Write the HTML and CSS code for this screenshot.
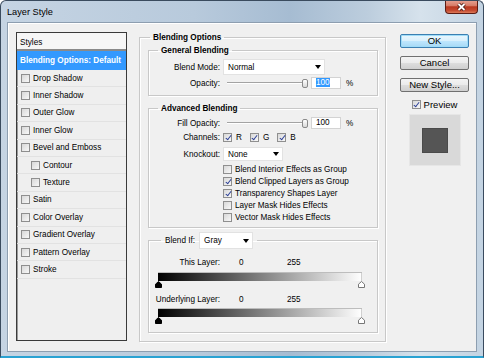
FILE: index.html
```html
<!DOCTYPE html>
<html lang="en">
<head>
    <meta charset="UTF-8">
    <meta name="viewport" content="width=device-width, initial-scale=1.0">
    <title>Layer Style</title>
    <link rel="stylesheet" href="styles.css">
</head>
<body>
    <div class="window">
        <div class="titlebar">
            <span class="title">Layer Style</span>
            <button class="close-btn">
                <svg width="13" height="10" viewBox="0 0 13 10"><path d="M3.5 2 L9.5 8 M9.5 2 L3.5 8" stroke="#4a1710" stroke-width="3.6"/><path d="M3.5 2 L9.5 8 M9.5 2 L3.5 8" stroke="#fff" stroke-width="1.8"/></svg>
            </button>
        </div>
        <div class="client">
            <div class="styles-list">
                <div class="list-head">Styles</div>
                <div class="list-item active">Blending Options: Default</div>
                <div class="list-item"><span class="check"></span>Drop Shadow</div>
                <div class="list-item"><span class="check"></span>Inner Shadow</div>
                <div class="list-item"><span class="check"></span>Outer Glow</div>
                <div class="list-item"><span class="check"></span>Inner Glow</div>
                <div class="list-item"><span class="check"></span>Bevel and Emboss</div>
                <div class="list-item sub"><span class="check"></span>Contour</div>
                <div class="list-item sub"><span class="check"></span>Texture</div>
                <div class="list-item"><span class="check"></span>Satin</div>
                <div class="list-item"><span class="check"></span>Color Overlay</div>
                <div class="list-item"><span class="check"></span>Gradient Overlay</div>
                <div class="list-item"><span class="check"></span>Pattern Overlay</div>
                <div class="list-item"><span class="check"></span>Stroke</div>
            </div>

            <fieldset class="group main-group">
                <legend>Blending Options</legend>

                <fieldset class="group general">
                    <legend>General Blending</legend>
                    <div class="form-row">
                        <span class="label">Blend Mode:</span>
                        <div class="select mode">Normal</div>
                    </div>
                    <div class="form-row gap-sm">
                        <span class="label">Opacity:</span>
                        <div class="slider-field">
                            <div class="slider"><span class="track"></span><span class="thumb"></span></div>
                            <span class="num-input"><span class="selected">100</span></span>
                            <span class="unit">%</span>
                        </div>
                    </div>
                </fieldset>

                <fieldset class="group advanced">
                    <legend>Advanced Blending</legend>
                    <div class="form-row">
                        <span class="label">Fill Opacity:</span>
                        <div class="slider-field">
                            <div class="slider"><span class="track"></span><span class="thumb"></span></div>
                            <span class="num-input">100</span>
                            <span class="unit">%</span>
                        </div>
                    </div>
                    <div class="form-row gap-sm">
                        <span class="label">Channels:</span>
                        <div class="channels">
                            <span class="check-item"><span class="check checked"></span>R</span>
                            <span class="check-item"><span class="check checked"></span>G</span>
                            <span class="check-item"><span class="check checked"></span>B</span>
                        </div>
                    </div>
                    <div class="form-row gap-md">
                        <span class="label">Knockout:</span>
                        <div class="select knockout">None</div>
                    </div>
                    <div class="form-row gap-sm">
                        <span></span>
                        <div class="option-list">
                            <span class="check-item"><span class="check"></span>Blend Interior Effects as Group</span>
                            <span class="check-item"><span class="check checked"></span>Blend Clipped Layers as Group</span>
                            <span class="check-item"><span class="check checked"></span>Transparency Shapes Layer</span>
                            <span class="check-item"><span class="check"></span>Layer Mask Hides Effects</span>
                            <span class="check-item"><span class="check"></span>Vector Mask Hides Effects</span>
                        </div>
                    </div>
                </fieldset>

                <fieldset class="group blend-if">
                    <legend><span class="legend-row">Blend If: <span class="select gray">Gray</span></span></legend>
                    <div class="range-row">
                        <span class="range-label">This Layer:</span>
                        <span class="range-val">0</span>
                        <span class="range-val">255</span>
                    </div>
                    <div class="gradient-bar first"></div>
                    <div class="thumbs">
                        <svg width="7" height="7" viewBox="0 0 7 7"><path d="M3.5 0.5 L6.5 3.2 L6.5 6.5 L0.5 6.5 L0.5 3.2 Z" fill="#000" stroke="#000"/></svg>
                        <svg width="7" height="7" viewBox="0 0 7 7"><path d="M3.5 0.5 L6.5 3.2 L6.5 6.5 L0.5 6.5 L0.5 3.2 Z" fill="#fff" stroke="#777"/></svg>
                    </div>
                    <div class="range-row second">
                        <span class="range-label">Underlying Layer:</span>
                        <span class="range-val">0</span>
                        <span class="range-val">255</span>
                    </div>
                    <div class="gradient-bar"></div>
                    <div class="thumbs">
                        <svg width="7" height="7" viewBox="0 0 7 7"><path d="M3.5 0.5 L6.5 3.2 L6.5 6.5 L0.5 6.5 L0.5 3.2 Z" fill="#000" stroke="#000"/></svg>
                        <svg width="7" height="7" viewBox="0 0 7 7"><path d="M3.5 0.5 L6.5 3.2 L6.5 6.5 L0.5 6.5 L0.5 3.2 Z" fill="#fff" stroke="#777"/></svg>
                    </div>
                </fieldset>
            </fieldset>

            <div class="actions">
                <button class="btn default">OK</button>
                <button class="btn">Cancel</button>
                <button class="btn">New Style...</button>
                <span class="preview-check"><span class="check checked"></span>Preview</span>
                <div class="preview-swatch"><div class="swatch-inner"></div></div>
            </div>
        </div>
    </div>
</body>
</html>
```

FILE: styles.css
```css
* { box-sizing: border-box; margin: 0; padding: 0; }
body {
    background: #fff;
    font-family: "Liberation Sans", Arial, sans-serif;
    font-size: 8.2px;
    color: #000;
}

/* window frame */
.window {
    width: 484px;
    height: 358px;
    border: 1px solid #3a4b5e;
    border-bottom: 2px solid #2aa2d2;
    border-radius: 6px 6px 0 0;
    background: linear-gradient(to right, #c5d4e3 0%, #b8cadc 40%, #a6bcd2 60%, #bccddd 76%, #d6e2ec 87%, #c3d3e2 100%);
    padding: 0 6px 4px;
    display: flex;
    flex-direction: column;
    overflow: hidden;
}
.titlebar {
    height: 21px;
    display: flex;
    align-items: flex-start;
}
.title {
    font-size: 9.2px;
    line-height: 22px;
    color: #000;
}
.close-btn {
    margin-left: auto;
    margin-top: -1px;
    margin-right: -1px;
    width: 33px;
    height: 14px;
    border: 1px solid #5b1c14;
    border-top: none;
    border-radius: 0 0 4px 4px;
    background: linear-gradient(#e8a495 0%, #d67b66 45%, #b9371f 52%, #c44a30 80%, #dd7a58 100%);
    display: flex;
    align-items: center;
    justify-content: center;
}

.client {
    height: 330px;
    background: #f0f0f0;
    border: 1px solid #8d9eb0;
    box-shadow: inset 1px 1px 0 #fff;
    display: flex;
    align-items: flex-start;
    padding: 9px 8px 0 8px;
}

/* styles list */
.styles-list {
    flex: none;
    width: 111px;
    height: 309px;
    border: 1px solid #3a3a3a;
    box-shadow: inset 1px 1px 0 #9a9a9a;
    background: #efefef;
}
.list-head {
    height: 18px;
    line-height: 19px;
    padding-left: 3px;
    background: #f6f6f6;
    border-bottom: 2px solid #8a8a8a;
}
.list-item {
    height: 17.4px;
    display: flex;
    align-items: center;
    gap: 3px;
    padding-left: 4px;
    border-bottom: 1px solid #e2e2e2;
}
.list-item.active {
    height: 19px;
    padding-left: 3px;
    background: #3399ff;
    color: #fff;
    font-weight: bold;
    border-bottom-color: #3399ff;
}
.list-item.sub { padding-left: 14px; }

.check {
    flex: none;
    position: relative;
    width: 9px;
    height: 9px;
    border: 1px solid #8f8f8f;
    background: linear-gradient(135deg, #d8d8d8, #f8f8f8);
}
.check.checked::after {
    content: "";
    position: absolute;
    left: 2.5px;
    top: 0;
    width: 2px;
    height: 5px;
    border: solid #2b3f96;
    border-width: 0 1.4px 1.4px 0;
    transform: rotate(38deg);
}

/* group boxes */
.group {
    border: 1px solid #c8c8c8;
    box-shadow: inset 1px 1px 0 #fff, 1px 1px 0 #fff;
    min-inline-size: 0;
}
.group > legend {
    font-weight: bold;
    line-height: 11px;
    padding: 0 3px;
}
.main-group {
    flex: none;
    width: 247px;
    margin-left: 12px;
    padding: 0 7px 8px 8px;
}
.main-group > legend { margin-left: 2px; }
.general, .advanced {
    padding: 0 0 6px 0;
}
.general { margin-top: 2px; }
.advanced { margin-top: 7px; padding-bottom: 4px; }
.general > legend, .advanced > legend { margin-left: 9px; }
.general > .form-row:first-of-type,
.advanced > .form-row:first-of-type { margin-top: 3px; }

.form-row {
    display: grid;
    grid-template-columns: 71px 1fr;
    column-gap: 3px;
    align-items: center;
}
.form-row.gap-sm { margin-top: 2px; }
.form-row.gap-md { margin-top: 4px; }
.label { text-align: right; white-space: nowrap; }

.select {
    display: flex;
    align-items: center;
    background: #fff;
    border: 1px solid #e2e2e2;
    padding-left: 4px;
}
.select::after {
    content: "";
    margin-left: auto;
    margin-right: 3px;
    border-left: 3px solid transparent;
    border-right: 3px solid transparent;
    border-top: 4px solid #000;
}
.select.mode { width: 102px; height: 16px; }
.select.knockout { width: 60px; height: 14px; }
.select.gray { width: 54px; height: 17px; font-weight: normal; }

.slider-field {
    display: flex;
    align-items: center;
    height: 12px;
}
.slider {
    width: 85px;
    padding-left: 4px;
    display: flex;
    align-items: center;
}
.track {
    flex: 1;
    height: 2px;
    border-top: 1px solid #a3a3a3;
    border-bottom: 1px solid #fff;
}
.thumb {
    flex: none;
    width: 6px;
    height: 9px;
    margin-left: -3px;
    border: 1px solid #8a8a8a;
    border-radius: 2px;
    background: linear-gradient(#fff, #d9d9d9);
}
.num-input {
    width: 30px;
    height: 12px;
    margin-left: 3px;
    padding-left: 4px;
    line-height: 10px;
    background: #fff;
    border: 1px solid #d3d3d3;
}
.selected { background: #3399ff; color: #fff; }
.unit { margin-left: 5px; }

.channels {
    display: flex;
    gap: 8px;
    height: 12px;
    align-items: center;
}
.check-item {
    display: flex;
    align-items: center;
    gap: 3px;
    white-space: nowrap;
}
.channels .check-item { gap: 4px; }
.option-list {
    display: flex;
    flex-direction: column;
}
.option-list .check-item { height: 12px; }

/* blend if */
.blend-if {
    margin-top: 4px;
    padding: 0 15px 8px 3px;
}
.blend-if > legend {
    margin-left: 9px;
    padding: 0 4px;
    line-height: normal;
}
.legend-row {
    display: flex;
    align-items: center;
    gap: 4px;
    height: 17px;
    font-weight: normal;
}
.range-row {
    display: grid;
    grid-template-columns: 68px 48px 40px;
    height: 12px;
    align-items: center;
    margin-top: 7px;
}
.range-row.second { margin-top: 5px; }
.range-label { justify-self: end; white-space: nowrap; }
.range-val { padding-left: 19px; }
.gradient-bar {
    height: 9px;
    margin: 3px 0 0 6px;
    background: linear-gradient(to right, #000, #fff);
    box-shadow: inset 0 1px 0 #bdbdbd, inset -1px 0 0 #d0d0d0;
}
.gradient-bar.first { margin-top: 4px; }
.thumbs {
    display: flex;
    justify-content: space-between;
    height: 7px;
    margin: 0 -3px 0 3px;
}
.thumbs svg { display: block; }

/* right side buttons */
.actions {
    flex: none;
    width: 69px;
    margin: 2px 0 0 14px;
    display: flex;
    flex-direction: column;
    gap: 8px;
}
.btn {
    height: 14px;
    border: 1px solid #707070;
    border-radius: 2px;
    background: linear-gradient(#f4f4f4 0%, #ebebeb 48%, #dddddd 52%, #cfcfcf 100%);
    font-family: inherit;
    font-size: 9.5px;
    line-height: 12px;
    color: #000;
}
.btn.default {
    border-color: #3c7fb1;
    background: linear-gradient(#eaf6fd 0%, #d9f0fc 48%, #bee6fd 52%, #a7d9f5 100%);
    box-shadow: inset 0 0 0 1px #9fdcf8;
}
.preview-check {
    display: flex;
    align-items: center;
    justify-content: center;
    gap: 3px;
    height: 12px;
    margin-top: -2px;
    font-size: 9.5px;
}
.preview-swatch {
    align-self: center;
    width: 52px;
    height: 52px;
    margin-top: -4px;
    background: #d9d9d9;
    border: 1px solid #e6e6e6;
    display: flex;
    align-items: center;
    justify-content: center;
}
.swatch-inner {
    width: 26px;
    height: 25px;
    background: #555;
    border: 1px solid #4a4a4a;
}
```
